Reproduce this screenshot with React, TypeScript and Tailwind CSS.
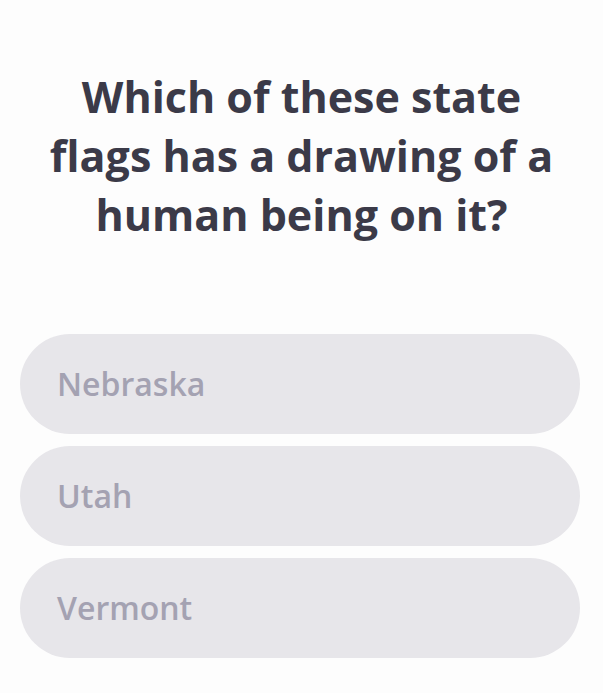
const options = ["Nebraska", "Utah", "Vermont"];

export default function App() {
	return (
		<div className="w-[603px] h-[693px] bg-[#fdfdfd] flex flex-col overflow-hidden font-['Open_Sans',sans-serif]">
			{/* Question */}
			<h1 className="mt-[67px] text-center text-[43px] leading-[59px] font-bold text-[#3b3a48]">
				Which of these state
				<br />
				flags has a drawing of a
				<br />
				human being on it?
			</h1>

			{/* Answers */}
			<div className="mt-[90px] flex flex-col gap-3 px-5">
				{options.map((option) => (
					<button
						key={option}
						className="h-[100px] w-[560px] rounded-full bg-[#e7e6ea] pl-[37px] text-left text-[32px] font-semibold text-[#a4a2b2]"
					>
						{option}
					</button>
				))}
			</div>
		</div>
	);
}
